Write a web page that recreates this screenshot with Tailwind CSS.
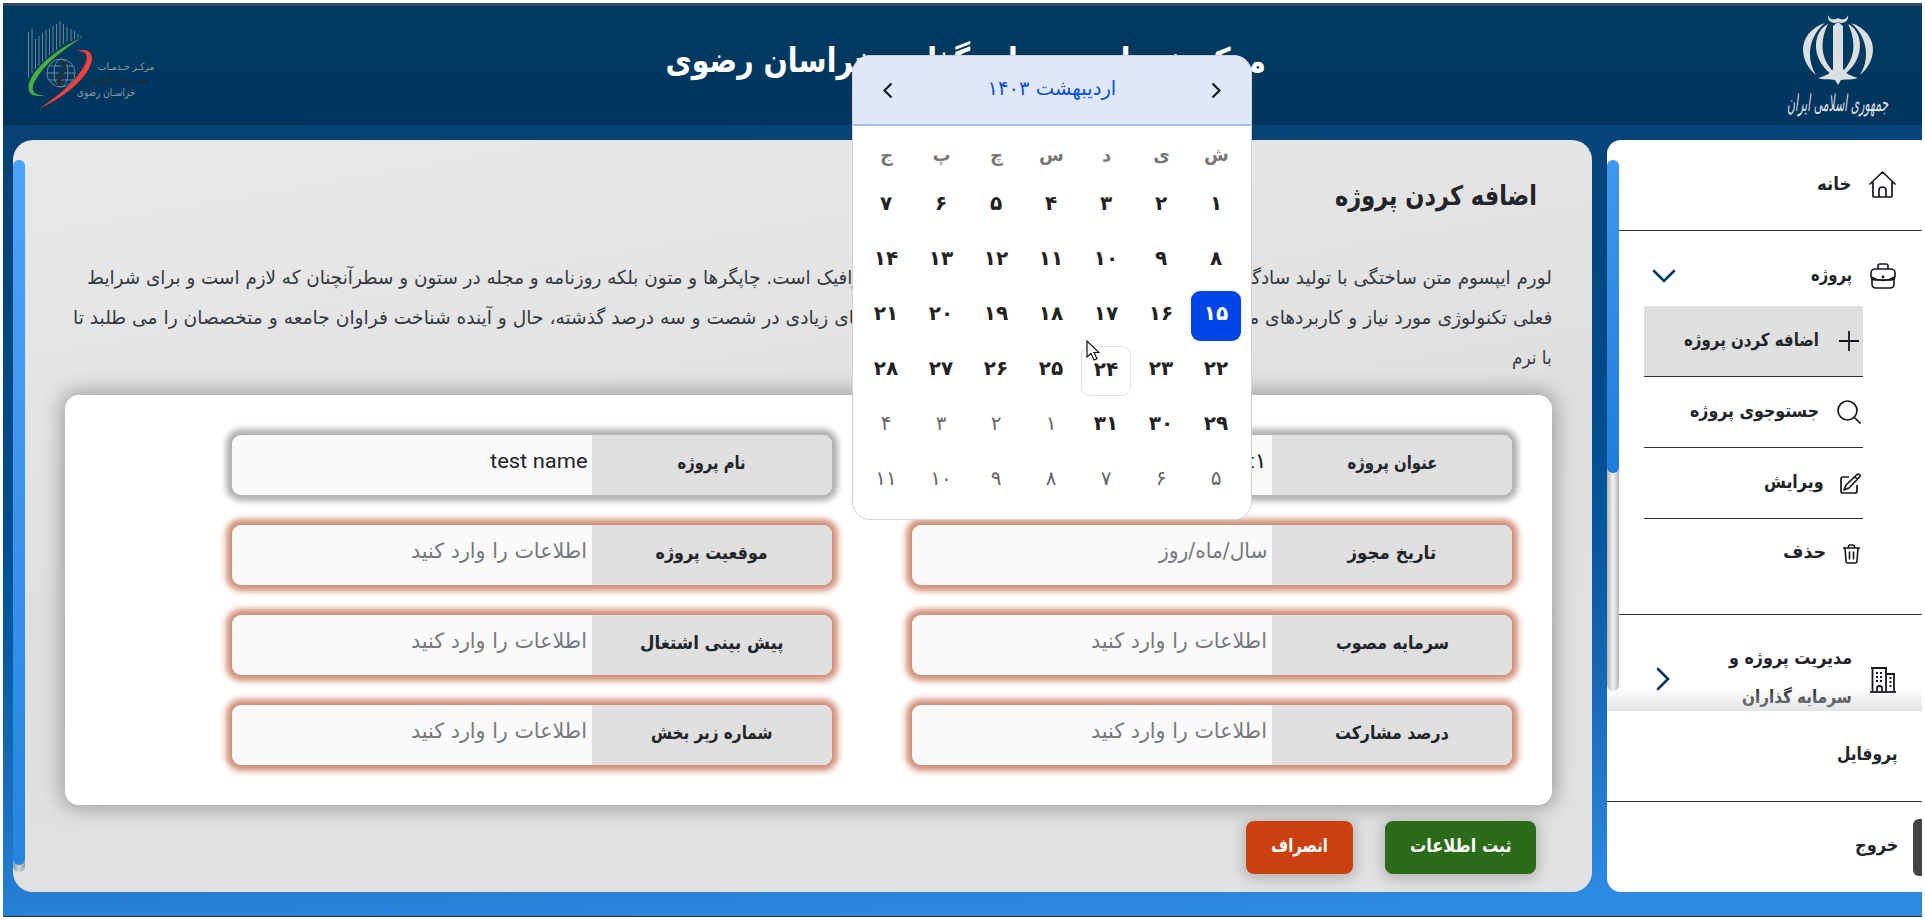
<!DOCTYPE html>
<html lang="fa">
<head>
<meta charset="utf-8">
<title>اضافه کردن پروژه</title>
<script src="https://cdn.jsdelivr.net/npm/@tailwindcss/browser@4"></script>
</head>
<body class="h-[920px] w-[1925px] overflow-hidden bg-white p-[3px] font-['DejaVu_Sans',sans-serif] text-[#212529]">
<div dir="rtl" class="relative flex h-[914px] w-[1919px] flex-col overflow-hidden border-b border-[#333] bg-linear-[177deg,#08406f_0%,#074274_14%,#004c8c_48%,#0558a0_62%,#1a6dbd_78%,#2d8ae3_96%]">
  <header class="flex h-[122px] shrink-0 items-start justify-between border-t-[3px] border-[#33475c] bg-linear-to-b from-[#003c62] to-[#00345c]">
    <div class="mr-[33px] mt-[9px] flex w-[102px] flex-col items-center text-[#dcdfe2]">
      <svg class="h-[70px] w-[70px]" viewBox="0 0 70 70" fill="currentColor">
        <path d="M25 0c1 4 5 6 10 3 5 3 9 1 10-3 1 5-3 8-7 8l-3-1-3 1c-4 0-8-3-7-8z"/>
        <path d="M35 7l5 4v43c3 5 8 7 15 9-5 2-12 1-17 2l-3 5-3-5c-5-1-12 0-17-2 7-2 12-4 15-9V11z"/>
        <path d="M25 9C9 17 8 44 28 59l3-2C17 44 17 25 25 9zM45 9c16 8 17 35-3 50l-3-2C53 44 53 25 45 9z"/>
        <path d="M22 8C-5 17-6 44 13 60 3 44 5 22 22 8zM48 8c27 9 28 36 9 52C67 44 65 22 48 8z"/>
      </svg>
      <span data-fit="101" data-center class="-mt-[2px] inline-block whitespace-nowrap text-[23px]/[40px] italic">جمهوری اسلامی ایران</span>
    </div>
    <h1 class="mt-[26px] flex flex-1 justify-center pr-[9px] text-[34px]/[56px] font-bold text-white"><span data-fit="600" data-center class="inline-block whitespace-nowrap">مرکز خدمات سرمایه گذاری خراسان رضوی</span></h1>
    <div dir="ltr" class="relative ml-[25px] mt-[14px] h-[92px] w-[126px]">
      <svg class="h-[92px] w-[66px]" viewBox="0 0 66 92" fill="none">
        <g stroke="#6b8397" stroke-width="1"><path d="M.5 12v46M4 9v44M7.500 19v30M11 16v30M14.500 13v29M18 10v29M21.500 8v27M25 6v27M28.500 4v26M32 1v26M35.500 4v20M39 7v15M43 9v12M46.500 11v8M50 14v4M53 16v2"/></g>
        <path d="M53 18C25 30-3 56 1 70c1 6 8 7 16 5C5 76 2 70 7 61c9-17 28-31 46-43z" fill="#4caf3c"/>
        <path d="M48 31c14-1 13 9 5 20-8 13-25 26-42 38 21-10 42-25 50-41 7-13 1-21-13-17z" fill="#f4443a"/>
        <g stroke="#71889a" stroke-width="1"><circle cx="33" cy="53" r="14"/><ellipse cx="33" cy="53" rx="7" ry="14"/><path d="M19 53h28M21 46h24M21 60h24"/></g>
        <path d="M34 41l5 1-1 5-5-1zM31 50l6-1-4 13 3-1-2 4-6 1 3-13z" fill="#23303c"/>
      </svg>
      <div dir="rtl" class="absolute right-0 top-[40px] flex w-[80px] flex-col items-start text-[10px]/[13px] text-[#8b9dac]">
        <span data-fit="56" class="inline-block whitespace-nowrap">مرکـز خـدمـات</span>
        <span data-fit="57" class="mr-[7px] inline-block whitespace-nowrap text-[#26282c]">سـرمایه گذاری</span>
        <span data-fit="58" class="mr-[19px] inline-block whitespace-nowrap text-[11px]">خراسـان رضوی</span>
      </div>
    </div>
  </header>

  <div class="mt-[15px] flex h-[752px] justify-between">
    <aside class="flex w-[315px] flex-col overflow-hidden rounded-l-[14px] bg-white font-bold">
      <div class="relative flex h-[571px] overflow-hidden">
        <nav class="w-[303px] shrink-0 text-[18px]">
          <div class="flex h-[91px] items-center gap-[18px] border-b border-[#333] pb-[1px] pr-[26px]">
            <svg class="size-[27px]" viewBox="0 0 27 27" fill="none" stroke="#15171f" stroke-width="1.700" stroke-linecap="round" stroke-linejoin="round"><path d="M1 13L13.500 1 26 13M4 11v14q0 1 1 1h17q1 0 1-1V11M10 26v-7q0-3 3.500-3t3.500 3v7"/></svg>
            <span data-fit="34" class="mb-[3px] inline-block">خانه</span>
          </div>
          <div class="h-[384px] border-b border-[#333] pt-[23px]">
            <div class="flex h-[44px] items-center pr-[26px]">
              <svg class="size-[26px]" viewBox="0 0 26 26" fill="none" stroke="#15171f" stroke-width="1.600"><rect x="1" y="6" width="24" height="11" rx="4"/><path d="M2 15v6q0 4 4 4h14q4 0 4-4v-6M1 14q12 7 24 0M8 6V3q0-2 2-2h6q2 0 2 2v3"/><circle cx="13" cy="14" r=".6"/></svg>
              <span data-fit="41" class="mb-[3px] mr-[18px] inline-block">پروژه</span>
              <svg class="ml-[33px] mr-auto h-[14px] w-[24px]" viewBox="0 0 24 14" fill="none" stroke="#00345c" stroke-width="2.600" stroke-linecap="round"><path d="M2 2l10 10L22 2"/></svg>
            </div>
            <ul class="mr-[59px] mt-[8px] w-[219px]">
              <li class="flex h-[71px] items-center border-b border-[#333] bg-[#dfdfdf] pr-[4px]">
                <svg class="size-[20px]" viewBox="0 0 20 20" stroke="#15171f" stroke-width="1.800"><path d="M10 0v20M0 10h20"/></svg>
                <span data-fit="135" class="mb-[4px] mr-[20px] inline-block whitespace-nowrap">اضافه کردن پروژه</span>
              </li>
              <li class="flex h-[71px] items-center border-b border-[#333] pr-[2px]">
                <svg class="size-[24px]" viewBox="0 0 24 24" fill="none" stroke="#15171f" stroke-width="1.700"><circle cx="10.500" cy="10.500" r="9.500"/><path d="M17.500 17.500L23.500 23.500"/></svg>
                <span data-fit="129" class="mb-[3px] mr-[18px] inline-block whitespace-nowrap">جستوجوی پروژه</span>
              </li>
              <li class="flex h-[71px] items-center border-b border-[#333] pr-[2px]">
                <svg class="size-[21px]" viewBox="0 0 21 21" fill="none" stroke="#15171f" stroke-width="1.700" stroke-linejoin="round"><path d="M9 4H3Q1 4 1 6v12q0 2 2 2h12q2 0 2-2v-6M17 1.500q1.500-1 2.500 0t0 2.500L9 15l-5 2 2-5zM15 4l2.500 2.500"/></svg>
                <span data-fit="60" class="mb-[3px] mr-[16px] inline-block">ویرایش</span>
              </li>
              <li class="flex h-[71px] items-center pb-[1px] pr-[3px]">
                <svg class="h-[20px] w-[17px]" viewBox="0 0 17 20" fill="none" stroke="#15171f" stroke-width="1.600"><path d="M0 4h17M2 4l1 13q0 2 2 2h7q2 0 2-2l1-13M5.500 4V2.500Q5.500 1 7 1h3q1.500 0 1.500 1.500V4M6.500 7.500v8M10.500 7.500v8"/></svg>
                <span data-fit="43" class="mb-[6px] mr-[17px] inline-block">حذف</span>
              </li>
            </ul>
          </div>
          <div class="flex pr-[26px] pt-[26px]">
            <svg class="mt-[26px] h-[26px] w-[26px]" viewBox="0 0 26 26" fill="none" stroke="#15171f" stroke-width="1.800"><path d="M0 25h26M2.500 25V1M1 1h16M16 1v24M16 7h9M24 7v18M7 25v-4q0-2 2.500-2t2.500 2v4M6 6h2M10 6h2M6 10h2M10 10h2M6 14h2M10 14h2M19.500 11h2M19.500 15h2M19.500 19h2"/></svg>
            <div class="-mt-[3px] mr-[18px] flex w-[123px] flex-col items-start text-[18px]/[39px]">
              <span data-fit="123" class="inline-block whitespace-nowrap">مدیریت پروژه و</span>
              <span data-fit="110" class="inline-block whitespace-nowrap">سرمایه گذاران</span>
            </div>
            <svg class="ml-[37px] mr-auto mt-[26px] h-[24px] w-[14px]" viewBox="0 0 14 24" fill="none" stroke="#00345c" stroke-width="2.600" stroke-linecap="round"><path d="M2 2l10 10L2 22"/></svg>
          </div>
        </nav>
        <div class="mt-[20px] h-[531px] w-[12px] rounded-full bg-linear-to-r from-[#b5b5b5] via-[#f2f2f2] to-[#b5b5b5]">
          <div class="h-[313px] rounded-full bg-linear-to-b from-[#3f98f0] to-[#1f7ddb]"></div>
        </div>
        <div class="absolute inset-x-0 bottom-0 h-[24px] bg-linear-to-t from-[#cfd2d6]/60 to-white/0"></div>
      </div>
      <div class="flex h-[91px] items-center border-b border-[#333] pb-[6px] pr-[24px] text-[18px]"><span data-fit="61" class="inline-block">پروفایل</span></div>
      <div class="flex h-[90px] items-center pb-[5px] pr-[24px] text-[18px]"><span data-fit="43" class="inline-block">خروج</span></div>
    </aside>

    <main class="ml-[10px] flex w-[1579px] overflow-hidden rounded-[20px] bg-linear-[170deg,#e9e9e9_0%,#dfdfdf_50%,#e2e2e2_100%]">
      <div class="w-[1567px] shrink-0">
        <h2 class="pr-[55px] pt-[36px] text-[27px]/[40px] font-bold"><span data-fit="202" class="inline-block whitespace-nowrap">اضافه کردن پروژه</span></h2>
        <div class="mt-[41px] pr-[40px] text-[19px]/[40px] text-[#343a40]">
          <p class="h-[40px]"><span data-fit="1465" class="inline-block whitespace-nowrap">لورم ایپسوم متن ساختگی با تولید سادگی نامفهوم از صنعت چاپ و با استفاده از طراحان گرافیک است. چاپگرها و متون بلکه روزنامه و مجله در ستون و سطرآنچنان که لازم است و برای شرایط</span></p>
          <p class="h-[40px]"><span data-fit="1480" class="inline-block whitespace-nowrap">فعلی تکنولوژی مورد نیاز و کاربردهای متنوع با هدف بهبود ابزارهای کاربردی می باشد. کتابهای زیادی در شصت و سه درصد گذشته، حال و آینده شناخت فراوان جامعه و متخصصان را می طلبد تا</span></p>
          <p class="h-[40px]"><span data-fit="40" class="inline-block whitespace-nowrap">با نرم</span></p>
        </div>
        <section id="fields" class="mr-[40px] mt-[18px] grid h-[410px] w-[1487px] grid-cols-[600px_600px] content-start gap-x-[80px] gap-y-[30px] rounded-[14px] bg-white pr-[40px] pt-[40px] shadow-[0_0_20px_4px_#a0a0a0]"></section>
        <div class="mr-[56px] mt-[16px] flex gap-[32px] text-[19px] font-bold text-white">
          <button class="flex h-[53px] w-[151px] items-center justify-center rounded-[8px] bg-[#2c6b1a] pb-[5px] shadow-[0_2px_14px_3px_#b4b4b4]"><span data-fit="102" data-center class="inline-block whitespace-nowrap">ثبت اطلاعات</span></button>
          <button class="flex h-[53px] w-[107px] items-center justify-center rounded-[8px] bg-[#cb4010] pb-[5px] shadow-[0_2px_14px_3px_#b4b4b4]"><span data-fit="57" data-center class="inline-block whitespace-nowrap">انصراف</span></button>
        </div>
      </div>
      <div class="mt-[20px] h-[712px] w-[12px] rounded-full bg-linear-to-r from-[#8e9aa3] via-[#d0d4d8] to-[#8e9aa3]">
        <div class="h-[705px] rounded-full bg-linear-to-b from-[#4aa3ff] to-[#2585e0]"></div>
      </div>
    </main>
  </div>

  <div class="absolute right-0 top-[816px] h-[57px] w-[9px] rounded-l-[6px] bg-[#444]"></div>

  <!-- date picker popup -->
  <div class="absolute left-[849px] top-[52px] flex h-[465px] w-[400px] flex-col overflow-hidden rounded-[18px] border border-[#d2d2d2] bg-white">
    <div class="flex h-[70px] shrink-0 items-center justify-between border-b-2 border-[#a3bfee] bg-[#e0e8f8] px-[30px]">
      <svg class="h-[17px] w-[10px]" viewBox="0 0 10 17" fill="none" stroke="#111827" stroke-width="2.200"><path d="M1.500 1.500l7 7-7 7"/></svg>
      <span data-fit="129" data-center class="mb-1 inline-block whitespace-nowrap text-[20px] text-[#0d50d8]">اردیبهشت ۱۴۰۳</span>
      <svg class="h-[17px] w-[10px]" viewBox="0 0 10 17" fill="none" stroke="#111827" stroke-width="2.200"><path d="M8.500 1.500l-7 7 7 7"/></svg>
    </div>
    <div class="grid h-[55px] grid-cols-[repeat(7,55px)] pl-[6px] pr-[7px] pt-[7px] text-center text-[18px]/[44px] font-bold text-[#777]">
      <span>ش</span><span>ی</span><span>د</span><span>س</span><span>چ</span><span>پ</span><span>ج</span>
    </div>
    <div id="days" class="grid grid-cols-[repeat(7,50px)] gap-[5px] pr-[10px] text-center text-[20px]/[44px] font-bold text-[#222]"></div>
  </div>

  <svg class="absolute left-[1083px] top-[337px] h-[22px] w-[14px]" viewBox="0 0 14 22" fill="#fff" stroke="#111" stroke-width="1.200"><path d="M1 1v16l4-3.500 3 6.500 3-1.200-3-6.300h5z"/></svg>
</div>
<script>
  // form fields: label, label width, placeholder or value, its width, filled
  const hint = 'اطلاعات را وارد کنید';
  const fields = [
    ['عنوان پروژه', 90, 'test project۱', 128, true],
    ['نام پروژه', 68, 'test name', 98, true],
    ['تاریخ مجوز', 89, 'سال/ماه/روز', 108],
    ['موقعیت پروژه', 112, hint, 176],
    ['سرمایه مصوب', 113, hint, 176],
    ['پیش بینی اشتغال', 144, hint, 176],
    ['درصد مشارکت', 114, hint, 176],
    ['شماره زیر بخش', 122, hint, 176],
  ];
  document.getElementById('fields').innerHTML = fields.map(([label, lw, text, tw, filled]) => `
    <div class="${filled ? 'flex h-[60px] rounded-[9px] bg-[#fafafa] shadow-[0_0_6px_6px_#b0b0b0]' : 'flex h-[60px] rounded-[9px] bg-[#fafafa] shadow-[0_0_6px_6px_#d08f79]'}">
      <div class="flex w-[240px] items-center justify-center rounded-r-[9px] bg-[#dfdfdf] pb-[5px] text-[18px] font-bold"><span data-fit="${lw}" data-center class="inline-block whitespace-nowrap">${label}</span></div>
      <div class="${filled ? "flex flex-1 items-center pb-[6px] pr-[5px] font-['Roboto','DejaVu_Sans',sans-serif] text-[21px]" : 'flex flex-1 items-center pb-[6px] pr-[5px] text-[21px] text-[#75797e]'}"><span dir="${filled ? 'ltr' : 'rtl'}" data-fit="${tw}" class="inline-block whitespace-nowrap">${text}</span></div>
    </div>`).join('');

  const fa = n => String(n).replace(/\d/g, d => '۰۱۲۳۴۵۶۷۸۹'[d]);
  const grid = document.getElementById('days');
  for (let i = 1; i <= 42; i++) {
    const cell = document.createElement('div');
    cell.textContent = fa(i > 31 ? i - 31 : i);
    cell.className = i === 15 ? 'h-[50px] rounded-[9px] bg-[#0045e6] text-white'
      : i === 24 ? 'h-[50px] rounded-[9px] border border-[#e0e0e0]'
      : i > 31 ? 'h-[50px] font-normal text-[#666]' : 'h-[50px]';
    grid.append(cell);
  }
  // condense or widen each label to its intended width, again whenever its natural width changes
  const fit = el => {
    el.style.transformOrigin = 'center' in el.dataset ? 'center' : 'right';
    el.style.transform = `scaleX(${el.dataset.fit / el.offsetWidth})`;
  };
  const watcher = new ResizeObserver(entries => entries.forEach(e => fit(e.target)));
  document.querySelectorAll('[data-fit]').forEach(el => { fit(el); watcher.observe(el); });
</script>
</body>
</html>
